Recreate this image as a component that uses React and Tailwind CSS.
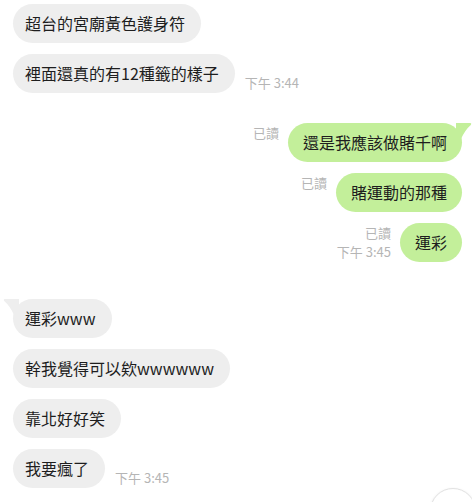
const font = { fontFamily: '"Noto Sans CJK TC", "Noto Sans", sans-serif' }

function LeftTail() {
  return (
    <svg className="absolute -left-[10px] top-0" width="16" height="16" viewBox="0 0 16 16">
      <path d="M16 0 H1.5 Q0 0.5 1.2 2 Q7 7 11 16 H16 Z" fill="#eeeeee" />
    </svg>
  )
}

function RightTail() {
  return (
    <svg className="absolute -right-[10px] top-0" width="16" height="16" viewBox="0 0 16 16">
      <path d="M0 0 H14.5 Q16 0.5 14.8 2 Q9 7 5 16 H0 Z" fill="#c3ef9a" />
    </svg>
  )
}

function Left({ text, time, tail, className = '' }) {
  return (
    <div className={`flex items-end pl-[13px] ${className}`}>
      <div className="relative h-[39px] rounded-[20px] bg-[#eeeeee] pl-3 pr-4 text-[16px] leading-[39px] text-[#1e1e1e] whitespace-nowrap">
        {tail && <LeftTail />}
        <span className="relative">{text}</span>
      </div>
      {time && <span className="ml-[10px] mb-[2px] text-[13px] leading-[17px] text-[#b5b5b5]">{time}</span>}
    </div>
  )
}

function Right({ text, time, tail, className = '' }) {
  return (
    <div className={`flex items-start justify-end pr-[10px] ${className}`}>
      <div className="mr-[9px] flex flex-col items-end gap-[1px] pt-[1px] text-[13px] leading-[18px] text-[#b5b5b5]">
        <span>已讀</span>
        {time && <span>{time}</span>}
      </div>
      <div className="relative h-[39px] rounded-[20px] bg-[#c3ef9a] px-[15px] text-[16px] leading-[39px] text-[#1e1e1e] whitespace-nowrap">
        {tail && <RightTail />}
        <span className="relative">{text}</span>
      </div>
    </div>
  )
}

export default function App() {
  return (
    <div className="relative h-[502px] w-[472px] overflow-hidden bg-white" style={font}>
      <div className="flex flex-col">
        <Left className="mt-[4px]" text="超台的宮廟黃色護身符" />
        <Left className="mt-[11px]" text="裡面還真的有12種籤的樣子" time="下午 3:44" />

        <Right className="mt-[30px]" text="還是我應該做賭千啊" tail />
        <Right className="mt-[11px]" text="賭運動的那種" />
        <Right className="mt-[11px]" text="運彩" time="下午 3:45" />

        <Left className="mt-[37px]" text="運彩www" tail />
        <Left className="mt-[11px]" text="幹我覺得可以欸wwwwww" />
        <Left className="mt-[11px]" text="靠北好好笑" />
        <Left className="mt-[11px]" text="我要瘋了" time="下午 3:45" />
      </div>

      {/* scroll-to-bottom button */}
      <div className="absolute left-[430px] top-[488px] h-[46px] w-[46px] rounded-full border border-[#e2e2e2] bg-white shadow-sm" />
    </div>
  )
}
